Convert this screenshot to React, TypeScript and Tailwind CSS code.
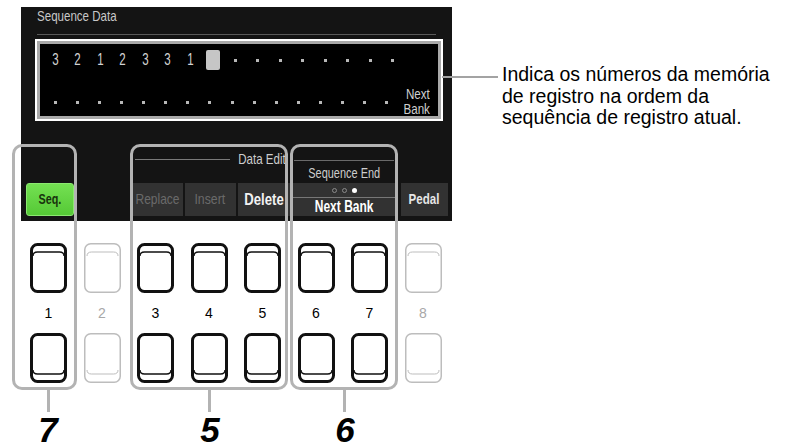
import React from "react";

const sans = "font-['Liberation_Sans',Arial,sans-serif]";

// One physical panel key, drawn as outline
const PanelKey = ({ lip, dim }: { lip: "top" | "bottom"; dim?: boolean }) => {
  const stroke = dim ? "#bdbdbd" : "#111";
  const w = dim ? 1.5 : 3;
  const inner =
    lip === "top"
      ? "M3 13 Q3 9 7.5 9 H29.5 Q34 9 34 13"
      : "M3 37 Q3 41 7.5 41 H29.5 Q34 41 34 37";
  return (
    <svg width="37" height="50" viewBox="0 0 37 50" className="block shrink-0">
      <rect x={w / 2} y={w / 2} width={37 - w} height={50 - w} rx="6" fill="#fff" stroke={stroke} strokeWidth={w} />
      <path d={inner} fill="none" stroke={stroke} strokeWidth={dim ? 1 : 1.4} />
    </svg>
  );
};

const sequence: (number | "cur" | null)[] = [3, 2, 1, 2, 3, 3, 1, "cur", null, null, null, null, null, null, null, null];

const Dot = () => <span className="block w-[3px] h-[3px] bg-[#b8b8b8]" />;

const Cell = ({ v }: { v: number | "cur" | null }) => (
  <div className="w-[22.5px] h-[20px] flex items-center justify-center">
    {v === null ? (
      <Dot />
    ) : v === "cur" ? (
      <span className="block w-[14px] h-[20px] rounded-[2px] bg-[#c6c6c6]" />
    ) : (
      <span className="inline-block scale-x-[0.72] text-[16px] leading-[20px] text-[#d2d2d2]">{v}</span>
    )}
  </div>
);

const keys = [1, 2, 3, 4, 5, 6, 7, 8];
const dimKeys = [2, 8];

export default function App() {
  return (
    <div className={`relative w-[794px] h-[443px] bg-white overflow-hidden flex ${sans}`}>
      {/* Left: screen + panel keys */}
      <div className="w-[452px] shrink-0 pl-[21px] pt-[7px]">
        <div className="w-[431px] h-[214px] bg-[#141414] flex flex-col">
          <div className="ml-[16px] mt-[1px] text-[15px] leading-[16px] text-[#c8c8c8]">
            <span className="inline-block scale-x-[0.77] origin-left">Sequence Data</span>
          </div>
          <div className="ml-[16px] mt-[10px] w-[399px] h-px bg-[#5a5a5a]" />

          {/* Sequence data box */}
          <div className="ml-[14px] mt-[4px] w-[408px] h-[82px] border-2 border-white">
            <div className="w-full h-full border-[3px] border-[#a9a9a9] bg-black pl-[4px] pt-[6px] flex flex-col gap-[17px]">
              <div className="flex">
                {sequence.map((v, i) => (
                  <Cell key={i} v={v} />
                ))}
              </div>
              <div className="flex items-center">
                {Array.from({ length: 16 }).map((_, i) => (
                  <Cell key={i} v={null} />
                ))}
                <div className="ml-auto mr-[8px] flex flex-col items-end text-[14px] leading-[15px] text-[#cfcfcf]">
                  <span className="inline-block scale-x-[0.83] origin-right">Next</span>
                  <span className="inline-block scale-x-[0.83] origin-right">Bank</span>
                </div>
              </div>
            </div>
          </div>

          {/* Screen button row */}
          <div className="ml-[3px] mt-[30px] w-[426px] grid grid-cols-8 gap-x-[2px]">
            <div className="col-start-3 col-span-3 h-[32px] flex items-start pr-[4px]">
              <div className="flex-1 ml-[4px] mt-[8px] h-px bg-[#7a7a7a]" />
              <span className="-ml-[6px] inline-block scale-x-[0.77] origin-right text-[15px] leading-[15px] text-[#cdcdcd]">Data Edit</span>
            </div>
            <div className="col-span-2 h-[32px] flex flex-col items-center pt-[9px]">
              <div className="w-[100px] h-px bg-[#6a6a6a]" />
              <span className="mt-[4px] inline-block scale-x-[0.73] text-[15px] leading-[15px] text-[#cdcdcd]">Sequence End</span>
            </div>
            <div className="col-start-8 h-[32px]" />

            <div className="h-[33px] mx-[2px] rounded-[3px] border border-[#8be870] bg-[linear-gradient(#74e052,#55c936)] flex items-center justify-center text-[15px] font-bold text-[#18320d]">
              <span className="inline-block scale-x-[0.72]">Seq.</span>
            </div>
            <div className="h-[33px]" />
            <div className="h-[33px] ml-[2px] bg-[#323232] flex items-center justify-center text-[15px] text-[#6a6a6a]">
              <span className="inline-block scale-x-[0.8]">Replace</span>
            </div>
            <div className="h-[33px] bg-[#323232] flex items-center justify-center text-[15px] text-[#6a6a6a]">
              <span className="inline-block scale-x-[0.82]">Insert</span>
            </div>
            <div className="h-[33px] bg-[#323232] flex items-center justify-center text-[16px] font-bold text-[#f2f2f2]">
              <span className="inline-block scale-x-[0.82]">Delete</span>
            </div>
            <div className="col-span-2 h-[33px] bg-[#323232] flex flex-col items-center">
              <div className="mt-[5px] flex items-center gap-[5px]">
                <span className="block w-[5px] h-[5px] rounded-full border border-[#8a8a8a]" />
                <span className="block w-[5px] h-[5px] rounded-full border border-[#8a8a8a]" />
                <span className="block w-[5px] h-[5px] rounded-full bg-white" />
              </div>
              <div className="mt-[4px] w-full h-px bg-[#777]" />
              <span className="mt-[1px] inline-block scale-x-[0.75] text-[16px] leading-[16px] font-bold text-white">Next Bank</span>
            </div>
            <div className="h-[33px] mx-[2px] bg-[#323232] flex items-center justify-center text-[15px] font-bold text-[#e6e6e6]">
              <span className="inline-block scale-x-[0.77]">Pedal</span>
            </div>
          </div>
        </div>

        {/* Panel keys */}
        <div className="ml-[9px] mt-[22px] flex gap-[16.5px]">
          {keys.map((k) => (
            <PanelKey key={k} lip="top" dim={dimKeys.includes(k)} />
          ))}
        </div>
        <div className="ml-[9px] h-[40px] flex gap-[16.5px]">
          {keys.map((k) => (
            <div
              key={k}
              className={`w-[37px] flex items-center justify-center text-[14px] ${dimKeys.includes(k) ? "text-[#a8a8a8]" : "text-black"}`}
            >
              {k}
            </div>
          ))}
        </div>
        <div className="ml-[9px] flex gap-[16.5px]">
          {keys.map((k) => (
            <PanelKey key={k} lip="bottom" dim={dimKeys.includes(k)} />
          ))}
        </div>
      </div>

      {/* Right: annotation */}
      <div className="ml-[50px] mt-[64px] text-[19.5px] leading-[21.5px] text-black">
        Indica os números da memória
        <br />
        de registro na ordem da
        <br />
        sequência de registro atual.
      </div>

      {/* Callout line */}
      <div className="absolute left-[442px] top-[76px] w-[56px] h-[2px] bg-[#a3a3a3]" />

      {/* Group outlines */}
      <div className="absolute left-[12px] top-[144px] w-[65px] h-[246px] border-[3px] border-[#b3b3b3] rounded-[10px]" />
      <div className="absolute left-[130px] top-[144px] w-[158px] h-[246px] border-[3px] border-[#b3b3b3] rounded-[10px]" />
      <div className="absolute left-[290px] top-[144px] w-[108px] h-[246px] border-[3px] border-[#b3b3b3] rounded-[10px]" />

      <div className="absolute left-[47px] top-[389px] w-[3px] h-[23px] bg-[#b3b3b3]" />
      <div className="absolute left-[208px] top-[389px] w-[3px] h-[23px] bg-[#b3b3b3]" />
      <div className="absolute left-[343px] top-[389px] w-[3px] h-[23px] bg-[#b3b3b3]" />

      <div className="absolute left-[28px] top-[412px] w-[40px] text-center text-[35px] leading-[35px] font-bold italic text-black">7</div>
      <div className="absolute left-[190px] top-[412px] w-[40px] text-center text-[35px] leading-[35px] font-bold italic text-black">5</div>
      <div className="absolute left-[325px] top-[412px] w-[40px] text-center text-[35px] leading-[35px] font-bold italic text-black">6</div>
    </div>
  );
}
